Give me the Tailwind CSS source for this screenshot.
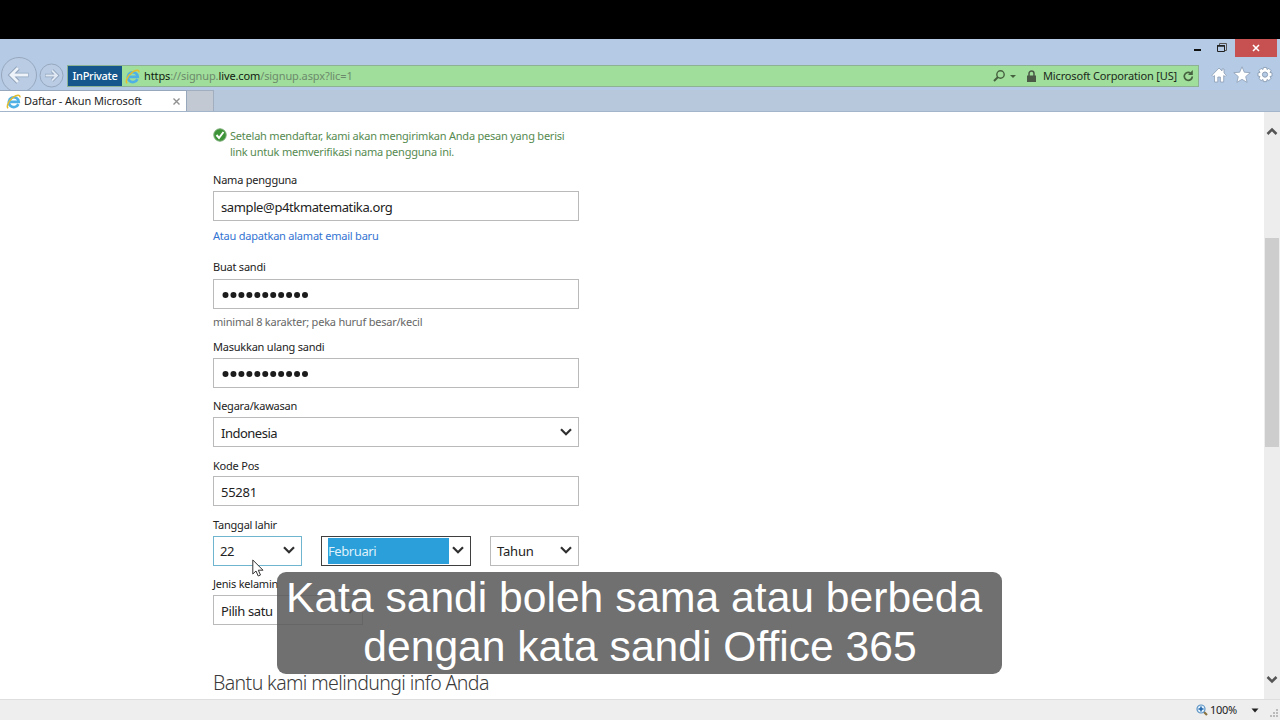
<!DOCTYPE html>
<html lang="id">
<head>
    <meta charset="UTF-8">
    <meta name="viewport" content="width=device-width, initial-scale=1.0">
    <title>Daftar - Akun Microsoft</title>
    <script src="https://cdn.jsdelivr.net/npm/@tailwindcss/browser@4"></script>
</head>
<body class="bg-black font-['Noto_Sans','Open_Sans',sans-serif] overflow-hidden">
    <!-- Shared icons -->
    <svg class="hidden">
        <symbol id="ie" viewBox="0 0 16 16">
            <path d="M13.200 10.800A5.300 5.300 0 1 1 13.600 8.400H4.500" fill="none" stroke="#4fb0e6" stroke-width="2.800"/>
            <path d="M2.300 15.200C0 13.500 2.800 7 7.600 3.500 11.500 .7 15.300 .3 14.800 3.500" fill="none" stroke="#e3bd2e" stroke-width="1.600"/>
        </symbol>
        <symbol id="chevron" viewBox="0 0 12 8">
            <path d="M1 1.200 6 6.200 11 1.200" fill="none" stroke="#2f2f2f" stroke-width="2.200"/>
        </symbol>
    </svg>

    <div class="relative w-[1280px] h-[720px] pt-[39px] flex flex-col">
        <!-- Browser chrome -->
        <header class="h-[73px] shrink-0 bg-[#b4cae5] border-b border-[#a3b5cb] flex flex-col">
            <div class="h-[24px] flex justify-end items-start">
                <svg class="w-[50px] h-[18px]" viewBox="0 0 50 18">
                    <path d="M1 11h7" stroke="#111" stroke-width="2"/>
                    <path d="M26.500 6V4.500h7v7H32" fill="none" stroke="#555"/>
                    <path d="M24.500 6.500h7v6h-7z" fill="none" stroke="#222"/>
                    <path d="M24 7h8" stroke="#222" stroke-width="1.500"/>
                </svg>
                <div class="w-[42px] h-[18px] ml-[-8px] bg-[#c75050] mr-[3px] flex items-center justify-center">
                    <svg class="w-[8px] h-[8px]" viewBox="0 0 8 8"><path d="M1 1l6 6M7 1L1 7" stroke="#fff" stroke-width="1.600"/></svg>
                </div>
            </div>
            <div class="h-[27px] flex items-start">
                <svg class="w-[67px] h-[27px] shrink-0 overflow-visible" viewBox="0 0 67 27">
                    <circle cx="19" cy="12" r="17.500" fill="#b9cce4" stroke="#97a8be"/>
                    <path d="M28.500 12H11M18 5l-7 7 7 7" fill="none" stroke="#8fa2ba" stroke-width="4.600"/>
                    <path d="M28 12H11M18 5l-7 7 7 7" fill="none" stroke="#eef3f9" stroke-width="2.800"/>
                    <circle cx="51.500" cy="12.500" r="11.500" fill="#b9cce4" stroke="#97a8be"/>
                    <path d="M45 12.500h12M52 7.500l5 5-5 5" fill="none" stroke="#8fa2ba" stroke-width="3.600"/>
                    <path d="M45.500 12.500h11M52 7.500l5 5-5 5" fill="none" stroke="#dfe8f3" stroke-width="1.900"/>
                </svg>
                <div class="w-[1132px] h-[22px] mt-[2px] bg-[#a0de9b] border border-[#8db193] flex items-center text-[11px] text-[#1c2a1c]">
                    <div class="w-[54px] h-[20px] bg-[#15578c] text-white font-medium flex items-center justify-center tracking-[-0.3px]">InPrivate</div>
                    <svg class="w-[15px] h-[15px] ml-[3px]"><use href="#ie"/></svg>
                    <div class="ml-[4px] text-[#6c8a6b] whitespace-nowrap tracking-[-0.11px]"><span class="text-[#101a10]">https</span>://signup.<span class="text-[#101a10]">live.com</span>/signup.aspx?lic=1</div>
                    <div class="ml-auto flex items-center">
                        <svg class="w-[26px] h-[14px]" viewBox="0 0 26 14">
                            <circle cx="9.500" cy="5.500" r="3.700" fill="none" stroke="#46613f" stroke-width="1.400"/>
                            <path d="M7 8 3 12" stroke="#46613f" stroke-width="2"/>
                            <path d="M19 6h6l-3 3z" fill="#46613f"/>
                        </svg>
                        <svg class="w-[9px] h-[12px] ml-[10px]" viewBox="0 0 9 12">
                            <path d="M0 5.500h9V12H0z" fill="#4a5a46"/>
                            <path d="M2 6V3.500a2.500 2.500 0 0 1 5 0V6" fill="none" stroke="#4a5a46" stroke-width="1.500"/>
                        </svg>
                        <span class="ml-[7px] whitespace-nowrap tracking-[-0.16px]">Microsoft Corporation [US]</span>
                        <svg class="w-[11px] h-[12px] ml-[6px] mr-[4px]" viewBox="0 0 11 12">
                            <path d="M9.300 6.500A4 4 0 1 1 7.500 3" fill="none" stroke="#46613f" stroke-width="1.700"/>
                            <path d="M9.800 0v5H5z" fill="#46613f"/>
                        </svg>
                    </div>
                </div>
                <svg class="w-[68px] h-[24px] ml-[12px]" viewBox="0 0 68 24">
                    <g fill="#fff" stroke="#8c9db4" stroke-width=".8">
                        <path d="M8 5 1 12.300l1.200 1.200 1.300-1v6.500h3.300v-5h2.600v5h3.300v-6.500l1.300 1 1.200-1.200-2.200-2.300V6h-2v2z"/>
                        <path d="M31 3.800l2.300 5.400 5.900.5-4.500 3.900 1.400 5.800-5.100-3.100-5.100 3.100 1.400-5.800-4.500-3.900 5.900-.5z"/>
                        <path transform="translate(54 11.600) scale(1.130) translate(-54 -11.300)" d="M52.600 5h2.800l.4 1.800 1.600-1 2 2-1 1.600 1.800.4v2.800l-1.800.4 1 1.600-2 2-1.600-1-.4 1.900h-2.800l-.4-1.900-1.600 1-2-2 1-1.600-1.800-.4V9.800l1.800-.4-1-1.600 2-2 1.600 1z"/>
                    </g>
                    <circle cx="54" cy="11.600" r="2.600" fill="#b4cae5" stroke="#8c9db4"/>
                </svg>
            </div>
            <div class="flex h-[21px] bg-[#b8c8dc]">
                <div class="relative w-[187px] bg-white border-t border-r border-[#98a8bc] flex items-center pl-[6px] text-[11px] text-[#1f1f1f]">
                    <svg class="w-[15px] h-[15px]"><use href="#ie"/></svg>
                    <span class="ml-[3px] whitespace-nowrap tracking-[-0.1px]">Daftar - Akun Microsoft</span>
                    <svg class="w-[7px] h-[7px] ml-auto mr-[6px]" viewBox="0 0 7 7"><path d="M.5.5l6 6M6.500.5l-6 6" stroke="#909090" stroke-width="1.400"/></svg>
                </div>
                <div class="w-[27px] bg-[#c2c9d3] border-t border-r border-[#a0aebf]"></div>
            </div>
        </header>

        <!-- Page and scrollbar -->
        <div class="h-[587px] flex bg-white">
            <main class="w-[1264px] pl-[213px] pt-[16px] text-[11px] leading-[16px] tracking-[-0.22px] text-[#222] overflow-hidden">
                <div class="flex h-[32px] text-[#568a50]">
                    <svg class="w-[14px] h-[14px] mr-[3px]" viewBox="0 0 14 14">
                        <circle cx="7" cy="7" r="6.200" fill="#3d9438" stroke="#78aa74"/>
                        <path d="M3.500 7l2.500 3 4.500-6" fill="none" stroke="#fff" stroke-width="2"/>
                    </svg>
                    <p class="whitespace-nowrap">Setelah mendaftar, kami akan mengirimkan Anda pesan yang berisi<br>link untuk memverifikasi nama pengguna ini.</p>
                </div>

                <div class="mt-[12px]">Nama pengguna</div>
                <div class="mt-[3px] w-[366px] h-[30px] border border-[#bababa] pl-[7px] pt-[1px] flex items-center text-[13px] tracking-[-0.38px]">sample@p4tkmatematika.org</div>
                <div class="mt-[7px] text-[#3373d2]">Atau dapatkan alamat email baru</div>

                <div class="mt-[15px]">Buat sandi</div>
                <div class="mt-[4px] w-[366px] h-[30px] border border-[#bababa] pl-[8px] pt-[2px] flex items-center">
                    <svg class="w-[88px] h-[8px]" viewBox="0 0 88 8"><path d="M3.500 4h80" stroke="#1c1c1c" stroke-width="6" stroke-linecap="round" stroke-dasharray="0 7.950"/></svg>
                </div>
                <div class="mt-[5px] text-[#666]">minimal 8 karakter; peka huruf besar/kecil</div>

                <div class="mt-[9px]">Masukkan ulang sandi</div>
                <div class="mt-[3px] w-[366px] h-[30px] border border-[#bababa] pl-[8px] pt-[2px] flex items-center">
                    <svg class="w-[88px] h-[8px]" viewBox="0 0 88 8"><path d="M3.500 4h80" stroke="#1c1c1c" stroke-width="6" stroke-linecap="round" stroke-dasharray="0 7.950"/></svg>
                </div>

                <div class="mt-[10px]">Negara/kawasan</div>
                <div class="mt-[3px] w-[366px] h-[30px] border border-[#bababa] pl-[7px] pr-[6px] pt-[1px] flex items-center justify-between text-[13px] tracking-[-0.5px]">
                    <span>Indonesia</span>
                    <svg class="w-[12px] h-[8px] mb-[2px]"><use href="#chevron"/></svg>
                </div>

                <div class="mt-[11px]">Kode Pos</div>
                <div class="mt-[2px] w-[366px] h-[30px] border border-[#bababa] pl-[7px] pt-[1px] flex items-center text-[13px] tracking-[-0.25px]">55281</div>

                <div class="mt-[11px]">Tanggal lahir</div>
                <div class="mt-[3px] w-[366px] h-[30px] flex justify-between text-[13px] tracking-[-0.4px]">
                    <div class="w-[89px] border border-[#70b5cf] pl-[6px] pr-[6px] flex items-center justify-between">
                        <span>22</span>
                        <svg class="w-[12px] h-[8px] mb-[2px]"><use href="#chevron"/></svg>
                    </div>
                    <div class="w-[150px] border border-[#3f3f3f] pl-[6px] pr-[6px] flex items-center justify-between">
                        <div class="w-[121px] h-[26px] bg-[#2a9fd9] text-[#dff1fb] flex items-center">Februari</div>
                        <svg class="w-[12px] h-[8px] mb-[2px]"><use href="#chevron"/></svg>
                    </div>
                    <div class="w-[89px] border border-[#bababa] pl-[6px] pr-[6px] flex items-center justify-between">
                        <span class="tracking-[-0.2px]">Tahun</span>
                        <svg class="w-[12px] h-[8px] mb-[2px]"><use href="#chevron"/></svg>
                    </div>
                </div>

                <div class="mt-[10px]">Jenis kelamin</div>
                <div class="mt-[3px] w-[150px] h-[30px] border border-[#bababa] pl-[7px] pr-[6px] pt-[1px] flex items-center justify-between text-[13px] tracking-[-0.4px]">
                    <span>Pilih satu</span>
                    <svg class="w-[12px] h-[8px] mb-[2px]"><use href="#chevron"/></svg>
                </div>

                <h2 class="mt-[45px] text-[19.5px] leading-[26px] tracking-[-0.6px] font-light text-[#3a3a3a] whitespace-nowrap">Bantu kami melindungi info Anda</h2>
            </main>
            <div class="w-[16px] bg-[#ededed] flex flex-col items-center">
                <svg class="w-[12px] h-[8px] mt-[15px]" viewBox="0 0 12 8"><path d="M1.500 7 6 2.500 10.500 7" fill="none" stroke="#555" stroke-width="2.500"/></svg>
                <div class="w-[14px] h-[209px] mt-[103px] bg-[#cdcdcd]"></div>
                <svg class="w-[12px] h-[8px] mt-auto mb-[15px]" viewBox="0 0 12 8"><path d="M1.500 1 6 5.500 10.500 1" fill="none" stroke="#555" stroke-width="2.500"/></svg>
            </div>
        </div>

        <!-- Status bar -->
        <footer class="h-[21px] bg-[#eee] border-t border-[#dedede] flex items-center justify-end text-[11px] text-[#222]">
            <svg class="w-[12px] h-[12px]" viewBox="0 0 12 12">
                <path d="M7.500 7.500l3.500 3.500" stroke="#8c7440" stroke-width="2.200"/>
                <circle cx="5" cy="5" r="4" fill="#e2f1fc" stroke="#5c93c4" stroke-width="1.200"/>
                <path d="M5 2.500v5M2.500 5h5" stroke="#1b62a8" stroke-width="1.500"/>
            </svg>
            <span class="ml-[2px] w-[28px] tracking-[-0.3px]">100%</span>
            <svg class="w-[8px] h-[5px] ml-[13px]" viewBox="0 0 8 5"><path d="M.5.5h7L4 4.500z" fill="#222"/></svg>
            <svg class="w-[12px] h-[12px] ml-[9px] self-end" viewBox="0 0 12 12"><path d="M8 1h2v2H8zM5 4h2v2H5zM8 4h2v2H8zM2 7h2v2H2zM5 7h2v2H5zM8 7h2v2H8z" fill="#bbb"/></svg>
        </footer>

        <!-- Mouse pointer -->
        <svg class="absolute left-[252px] top-[559px] w-[13px] h-[19px]" viewBox="0 0 13 19">
            <path d="M.8 1v14l3.200-3 2.200 5 2.300-1-2.200-4.800H11z" fill="#fff" stroke="#333"/>
        </svg>

        <!-- Subtitle -->
        <div class="absolute left-[277px] top-[572px] w-[725px] h-[102px] pt-px pl-px rounded-[9px] bg-[#585858]/86 text-white text-center whitespace-nowrap font-['Liberation_Sans',Arial,sans-serif] text-[42.6px] leading-[49px]">Kata sandi boleh sama atau berbeda&nbsp;<br>dengan kata sandi Office 365</div>
    </div>
</body>
</html>
